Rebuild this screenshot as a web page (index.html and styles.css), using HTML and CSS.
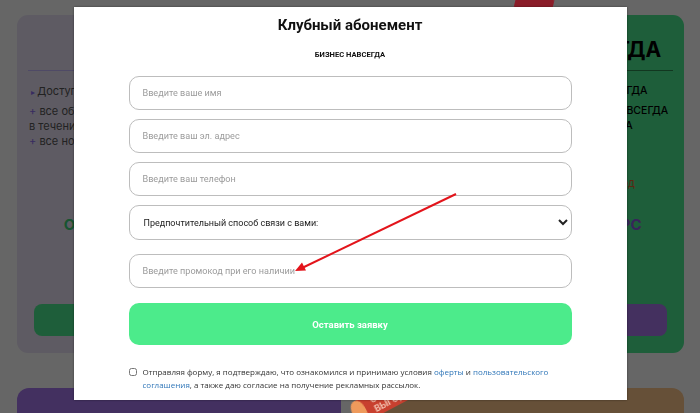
FILE: index.html
```html
<!DOCTYPE html>
<html lang="ru">
<head>
    <meta charset="UTF-8">
    <meta name="viewport" content="width=device-width, initial-scale=1.0">
    <title>Клубный абонемент</title>
    <link rel="stylesheet" href="styles.css">
</head>
<body>
    <div class="page">
        <div class="plan plan-lilac">
            <h2 class="plan-title">БИЗНЕС</h2>
            <ul class="plan-list">
                <li class="lead">Доступ к материалам курса</li>
                <li>все обновления курса<br>в течение года</li>
                <li>все новые уроки и эфиры</li>
            </ul>
            <div class="plan-price">ОПЛАТА ОТ 1 490 ₽ ЗА МЕСЯЦ</div>
            <button class="plan-btn">Выбрать</button>
        </div>

        <div class="plan plan-green">
            <span class="sticker-hit"></span>
            <h2 class="plan-title">БИЗНЕС-КЛУБ НАВСЕГДА</h2>
            <ul class="plan-list">
                <li>ДОСТУП КО ВСЕМ МАТЕРИАЛАМ КЛУБА НАВСЕГДА</li>
                <li>ВСЕ ОБНОВЛЕНИЯ И НОВЫЕ УРОКИ КУРСОВ НАВСЕГДА<br>ЗАКРЫТЫЙ ЧАТ УЧАСТНИКОВ КЛУБА НАВСЕГДА</li>
            </ul>
            <div class="plan-old">было 29 990 ₽ при оплате частями за год</div>
            <div class="plan-price">ОПЛАТА 9 990 ₽ ЗА ВЕСЬ КУРС</div>
            <button class="plan-btn">Выбрать</button>
        </div>

        <div class="promo-card promo-purple"></div>
        <div class="promo-card promo-sand">
            <span class="sticker-sale"><i></i>СКИДКИ<br>ВЫГОДЫ</span>
        </div>
    </div>

    <div class="overlay"></div>

    <div class="modal-wrap">
        <div class="modal">
            <h1 class="modal-title">Клубный абонемент</h1>
            <p class="modal-sub">БИЗНЕС НАВСЕГДА</p>
            <form class="lead-form">
                <input class="field" type="text" placeholder="Введите ваше имя">
                <input class="field" type="email" placeholder="Введите ваш эл. адрес">
                <input class="field" type="tel" placeholder="Введите ваш телефон">
                <select class="field field-select">
                    <option>Предпочтительный способ связи с вами:</option>
                    <option>Телефон</option>
                    <option>Telegram</option>
                    <option>WhatsApp</option>
                </select>
                <input class="field field-promo" type="text" placeholder="Введите промокод при его наличии">
                <button class="submit" type="button">Оставить заявку</button>
                <label class="consent">
                    <input type="checkbox">
                    <span>Отправляя форму, я подтверждаю, что ознакомился и принимаю условия <a href="#">оферты</a> и <a href="#">пользовательского соглашения</a>, а также даю согласие на получение рекламных рассылок.</span>
                </label>
            </form>
        </div>
    </div>

    <svg class="hint-arrow" width="700" height="413" viewBox="0 0 700 413">
        <line x1="456" y1="194" x2="302" y2="268" stroke="#e3141b" stroke-width="2"/>
        <polygon points="295,271 306,270.5 302,262.5" fill="#e3141b"/>
    </svg>
</body>
</html>
```

FILE: styles.css
```css
body {
    margin: 0;
    background: #fff;
    font-family: 'Inter', sans-serif;
    overflow: hidden;
}

/* page behind the popup */
.page {
    display: grid;
    grid-template-columns: repeat(2, minmax(0, 1fr));
    column-gap: 20px;
    row-gap: 35px;
    padding: 15px 16px 0 17px;
}

.plan {
    position: relative;
    height: 338px;
    box-sizing: border-box;
    border-radius: 11px;
    padding: 0 11px 17px;
    display: flex;
    flex-direction: column;
    overflow: visible;
}

.plan-lilac {
    background: #ebe4f7;
    color: #555;
}

.plan-green {
    background: #4deb91;
    color: #000;
}

.plan-title {
    margin: 0;
    height: 56px;
    box-sizing: border-box;
    padding-top: 23px;
    font-size: 21px;
    line-height: 24px;
    text-align: center;
    white-space: nowrap;
    border-bottom: 1px solid #c5b9ff;
}

.plan-green .plan-title {
    border-bottom-color: #2f8a52;
}

.plan-list {
    list-style: none;
    margin: 0;
    padding: 13px 0 0 1px;
    font-size: 11px;
    line-height: 15px;
}

.plan-list li:before {
    content: "+ ";
    color: #8a6cf0;
}

.plan-list li.lead {
    padding-left: 2px;
    margin-bottom: 4px;
}

.plan-list li.lead:before {
    content: "▸ ";
    font-size: 8px;
}

.plan-green .plan-list {
    font-size: 10.5px;
    font-weight: 500;
    padding-top: 12px;
    white-space: nowrap;
}

.plan-green .plan-list li:before {
    content: "";
}

.plan-green .plan-list li {
    margin-bottom: 5px;
}

.plan-old {
    margin-top: auto;
    text-align: center;
    font-size: 11px;
    line-height: 14px;
    white-space: nowrap;
    color: #e0622e;
}

.plan-price {
    margin-top: auto;
    margin-bottom: 69px;
    text-align: center;
    font-size: 15px;
    line-height: 20px;
    font-weight: 700;
    white-space: nowrap;
    color: #3cd27a;
}

.plan-green .plan-old + .plan-price {
    margin-top: 25px;
    color: #8a5ee0;
}

.plan-btn {
    height: 32px;
    margin: 0 6px;
    border: none;
    border-radius: 8px;
    background: #4deb91;
    color: #fff;
    font-family: inherit;
    font-size: 13px;
}

.plan-green .plan-btn {
    background: #aa78ee;
}

.promo-card {
    position: relative;
    height: 25px;
    border-radius: 12px 12px 0 0;
}

.promo-purple {
    background: #a878f0;
}

.promo-sand {
    background: #ffc88c;
}

/* stickers sit above the backdrop */
.sticker-hit {
    position: absolute;
    z-index: 20;
    top: -26px;
    left: 154px;
    width: 38px;
    height: 30px;
    border-radius: 9px;
    background: #8a1c28;
    transform: rotate(14deg);
}

.sticker-sale {
    position: absolute;
    z-index: 20;
    top: 14px;
    left: -8px;
    padding: 2px 8px 2px 16px;
    background: #c8402f;
    color: #f3c1b0;
    font-size: 9px;
    font-weight: 700;
    line-height: 10px;
    transform: rotate(-28deg);
    transform-origin: left top;
}

.sticker-sale i {
    position: absolute;
    left: -6px;
    top: 0;
    width: 14px;
    height: 22px;
    border-radius: 50% 50% 40% 60%;
    background: #ee9a5c;
}

.overlay {
    position: fixed;
    inset: 0;
    z-index: 10;
    background: rgba(0, 0, 0, 0.6);
}

/* popup */
.modal-wrap {
    position: fixed;
    inset: 0;
    z-index: 30;
    display: flex;
    justify-content: center;
    align-items: flex-start;
    padding-top: 7px;
}

.modal {
    width: 553px;
    box-sizing: border-box;
    background: #fff;
    box-shadow: 0 0 2px rgba(0, 0, 0, 0.45);
    padding: 7px 55px 9px;
    font-family: 'Roboto', sans-serif;
}

.modal-title {
    margin: 0;
    text-align: center;
    font-size: 15px;
    line-height: 22px;
    font-weight: 700;
    color: #111;
}

.modal-sub {
    margin: 13px 0 0;
    text-align: center;
    font-size: 7.6px;
    line-height: 12px;
    font-weight: 700;
    color: #111;
}

.lead-form {
    display: flex;
    flex-direction: column;
    margin-top: 15px;
}

.field {
    height: 34px;
    margin-bottom: 9px;
    box-sizing: border-box;
    border: 1px solid #bdbdbd;
    border-radius: 10px;
    padding: 0 13px;
    background: #fff;
    font-family: 'Roboto', sans-serif;
    font-size: 9.1px;
    color: #333;
    outline: none;
}

.field::placeholder {
    color: #9b9b9b;
}

.field-select {
    height: 35px;
    margin-bottom: 14px;
    padding-left: 10px;
    font-size: 9px;
    color: #222;
}

.field-promo {
    margin-bottom: 15px;
}

.submit {
    height: 42px;
    border: none;
    border-radius: 10px;
    background: #4ceb8b;
    color: #fff;
    font-family: 'Roboto', sans-serif;
    font-size: 9.5px;
    font-weight: 700;
    cursor: pointer;
}

.consent {
    display: flex;
    align-items: flex-start;
    gap: 6px;
    margin-top: 21px;
    font-family: 'Open Sans', sans-serif;
    font-size: 8px;
    line-height: 12.5px;
    color: #333;
}

.consent input {
    width: 8px;
    height: 8px;
    margin: 2px 0 0 0;
    flex-shrink: 0;
}

.consent a {
    color: #2f76b8;
    text-decoration: none;
}

.hint-arrow {
    position: fixed;
    top: 0;
    left: 0;
    z-index: 40;
    pointer-events: none;
}
```
